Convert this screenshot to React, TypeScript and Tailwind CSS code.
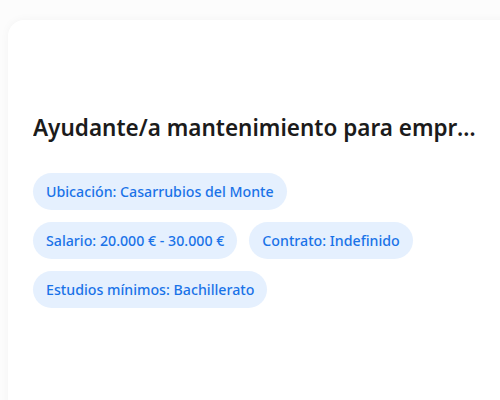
const chips = [
  ["Ubicación: Casarrubios del Monte"],
  ["Salario: 20.000 € - 30.000 €", "Contrato: Indefinido"],
  ["Estudios mínimos: Bachillerato"],
];

export default function App() {
  return (
    <div className="h-[400px] w-[500px] overflow-hidden bg-[#fcfcfc] pt-5 pl-2 font-['Noto_Sans',sans-serif]">
      <div className="h-[420px] w-[520px] rounded-2xl bg-white pt-[92px] pl-[25px] shadow-[0_0_10px_rgba(0,0,0,0.04)]">
        <h2 className="w-[444px] truncate text-[22.5px] leading-8 font-semibold text-[#1b1b1b]">
          Ayudante/a mantenimiento para empresa de servicios
        </h2>
        <div className="mt-[29px] flex flex-col gap-3">
          {chips.map((row, i) => (
            <div key={i} className="flex gap-3">
              {row.map((c) => (
                <span
                  key={c}
                  className="flex h-[37px] items-center rounded-full bg-[#e5f0fe] px-[13px] text-[14.2px] font-medium text-[#1a73e8]"
                >
                  {c}
                </span>
              ))}
            </div>
          ))}
        </div>
      </div>
    </div>
  );
}
